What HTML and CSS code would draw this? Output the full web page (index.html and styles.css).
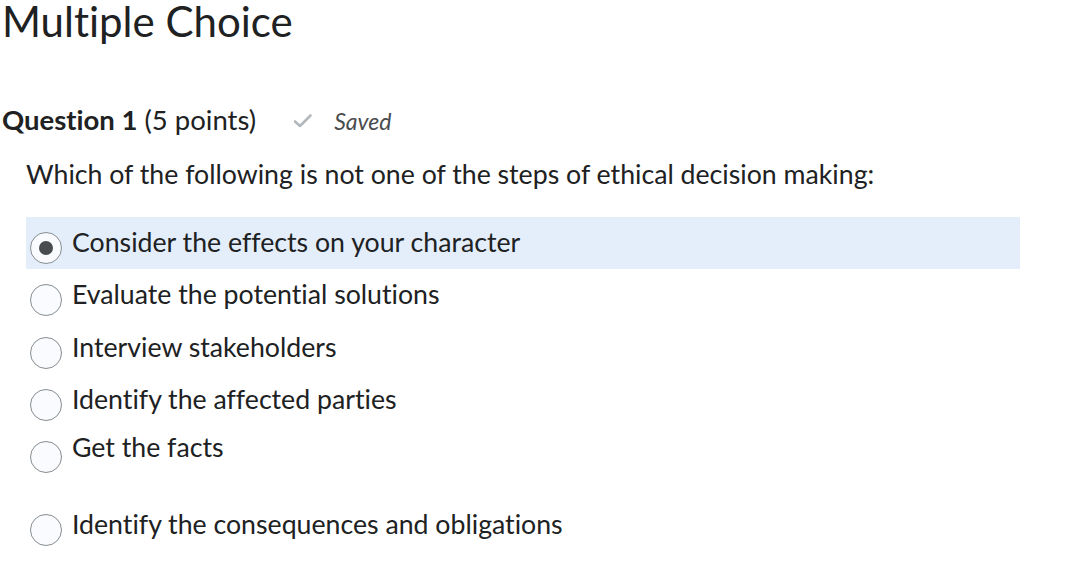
FILE: index.html
```html
<!DOCTYPE html>
<html lang="en">
<head>
<meta charset="utf-8">
<title>Multiple Choice</title>
<link rel="stylesheet" href="styles.css">
</head>
<body>
<main class="page">
  <h1 class="title">Multiple Choice</h1>
  <div class="qhead">
    <h2 class="qtitle"><strong>Question 1</strong> (5 points)</h2>
    <span class="saved">
      <svg class="check" width="20" height="16" viewBox="0 0 20 16" aria-hidden="true"><path d="M2 8.5 L7 13 L17.5 2.5" fill="none" stroke="#b3b8bc" stroke-width="2.6" stroke-linecap="round" stroke-linejoin="round"/></svg>
      <em>Saved</em>
    </span>
  </div>
  <p class="prompt">Which of the following is not one of the steps of ethical decision making:</p>
  <div class="options">
    <label class="opt opt-selected"><span class="radio radio-on"></span><span class="otext">Consider the effects on your character</span></label>
    <label class="opt"><span class="radio"></span><span class="otext">Evaluate the potential solutions</span></label>
    <label class="opt"><span class="radio"></span><span class="otext">Interview stakeholders</span></label>
    <label class="opt"><span class="radio"></span><span class="otext">Identify the affected parties</span></label>
    <label class="opt opt-tall"><span class="radio"></span><span class="otext otext-high">Get the facts</span></label>
    <label class="opt"><span class="radio"></span><span class="otext">Identify the consequences and obligations</span></label>
  </div>
</main>
</body>
</html>
```

FILE: styles.css
```css
* { box-sizing: border-box; }
html, body {
  margin: 0;
  padding: 0;
  background: #ffffff;
}
body {
  font-family: Lato, "Noto Sans", sans-serif;
  color: #202122;
  font-variant-ligatures: none;
  font-feature-settings: "liga" 0, "clig" 0;
}
.page {
  padding: 1px 0 0 1px;
}
.title {
  margin: 0 0 0 1px;
  font-size: 42px;
  font-weight: 400;
  line-height: 40px;
}
.qhead {
  display: flex;
  align-items: baseline;
  margin-top: 64px;
  padding-left: 1px;
}
.qtitle {
  margin: 0;
  font-size: 27.5px;
  font-weight: 400;
  line-height: 30px;
}
.qtitle strong { font-weight: 700; }
.saved {
  display: inline-flex;
  align-items: baseline;
  margin-left: 37px;
  font-size: 23px;
  color: #494c4e;
}
.check {
  align-self: center;
  margin-right: 21px;
}
.prompt {
  margin: 24px 0 0 25px;
  font-size: 26.7px;
  line-height: 30px;
}
.options {
  margin-top: 28px;
  margin-left: 25px;
  width: 994px;
  display: flex;
  flex-direction: column;
}
.opt {
  display: flex;
  align-items: flex-start;
  height: 52.3px;
}
.opt-selected { background: #e3eefa; }
.opt-tall { height: 73px; }
.radio {
  flex: none;
  width: 32px;
  height: 32px;
  margin: 15px 0 0 4px;
  border: 1px solid #878d90;
  border-radius: 50%;
  background: #f9fbff;
  display: flex;
  align-items: center;
  justify-content: center;
}
.radio-on::after {
  content: "";
  width: 14px;
  height: 14px;
  border-radius: 50%;
  background: #494c4e;
}
.otext {
  margin-left: 10px;
  padding-top: 10px;
  font-size: 26.7px;
  line-height: 30px;
}
.otext-high { padding-top: 6px; }
```
